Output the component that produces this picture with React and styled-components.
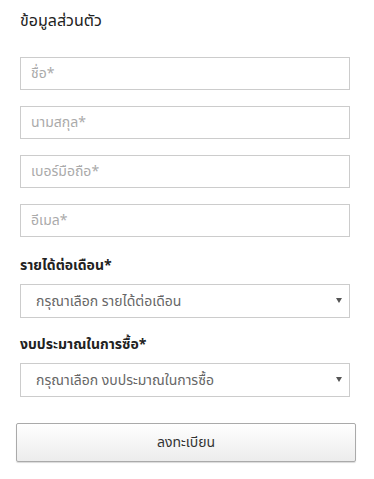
import React from "react";
import styled, { createGlobalStyle } from "styled-components";

const GlobalStyle = createGlobalStyle`
  body {
    margin: 0;
    background: #fff;
    font-family: Tahoma, "Noto Sans Thai", "Noto Sans", "DejaVu Sans", sans-serif;
  }
`;

const Page = styled.div`
  width: 374px;
  height: 479px;
  padding: 10px 0 0 20px;
  box-sizing: border-box;
`;

const Title = styled.h2`
  margin: 0 0 25px;
  font-size: 16px;
  font-weight: normal;
  color: #222;
  line-height: 22px;
`;

const Form = styled.form`
  display: flex;
  flex-direction: column;
  width: 330px;
`;

const Fields = styled.div`
  display: flex;
  flex-direction: column;
  gap: 16px;
`;

const Input = styled.input`
  box-sizing: border-box;
  height: 33px;
  width: 100%;
  border: 1px solid #ccc;
  padding: 0 10px;
  font-family: inherit;
  font-size: 14px;
  color: #333;
  outline: none;
  &::placeholder {
    color: #aaa;
  }
`;

const Label = styled.label`
  display: block;
  margin: ${(p) => (p.first ? "20px" : "18px")} 0 9px;
  font-size: 14px;
  font-weight: bold;
  color: #222;
  line-height: 18px;
`;

const SelectWrap = styled.div`
  position: relative;
  &::after {
    content: "";
    position: absolute;
    right: 8px;
    top: 14px;
    border-left: 3px solid transparent;
    border-right: 3px solid transparent;
    border-top: 5px solid #555;
    pointer-events: none;
  }
`;

const Select = styled.select`
  appearance: none;
  box-sizing: border-box;
  width: 100%;
  height: 34px;
  border: 1px solid #ccc;
  border-radius: 0;
  background: #fff;
  padding: 0 15px;
  font-family: inherit;
  font-size: 14px;
  color: #666;
  outline: none;
`;

const Button = styled.button`
  box-sizing: border-box;
  margin: 26px 0 0 -4px;
  width: 340px;
  height: 39px;
  border: 1px solid #aaa;
  border-radius: 2px;
  background: linear-gradient(#fff, #ececec);
  box-shadow: 0 1px 1px rgba(0, 0, 0, 0.15);
  font-family: inherit;
  font-size: 14px;
  color: #333;
  cursor: pointer;
`;

export default function App() {
  return (
    <Page>
      <GlobalStyle />
      <Title>ข้อมูลส่วนตัว</Title>
      <Form onSubmit={(e) => e.preventDefault()}>
        <Fields>
          <Input placeholder="ชื่อ*" />
          <Input placeholder="นามสกุล*" />
          <Input placeholder="เบอร์มือถือ*" />
          <Input placeholder="อีเมล*" />
        </Fields>
        <Label first>รายได้ต่อเดือน*</Label>
        <SelectWrap>
          <Select defaultValue="">
            <option value="">กรุณาเลือก รายได้ต่อเดือน</option>
          </Select>
        </SelectWrap>
        <Label>งบประมาณในการซื้อ*</Label>
        <SelectWrap>
          <Select defaultValue="">
            <option value="">กรุณาเลือก งบประมาณในการซื้อ</option>
          </Select>
        </SelectWrap>
        <Button type="submit">ลงทะเบียน</Button>
      </Form>
    </Page>
  );
}
